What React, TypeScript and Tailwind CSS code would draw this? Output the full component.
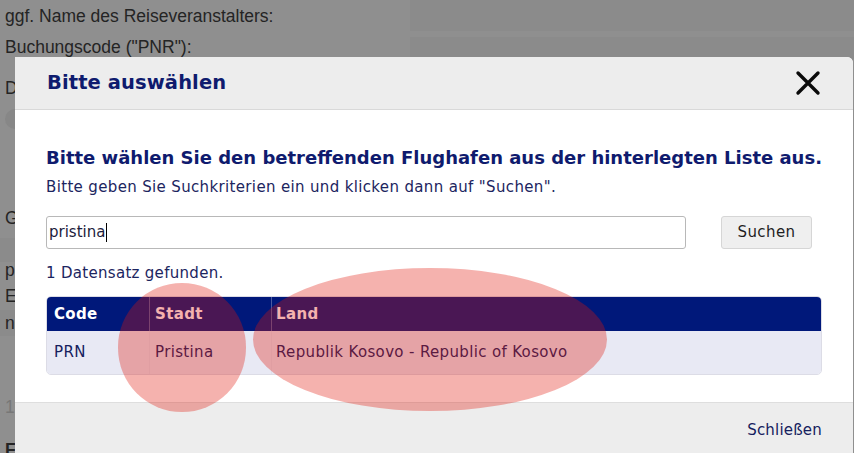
import React from "react";

const verdana = { fontFamily: '"DejaVu Sans", Verdana, sans-serif' };

function PageBehind() {
  // booking form that sits under the dimmed overlay
  return (
    <div className="absolute inset-0 bg-[#8f8f8f] text-[#242424] text-[17.5px]" style={{ fontFamily: '"Liberation Sans", Arial, sans-serif' }}>
      <div className="flex h-[32px] items-center">
        <span className="pl-[5px] w-[410px]">ggf. Name des Reiseveranstalters:</span>
        <div className="flex-1 h-[31px] self-start bg-[#8b8b8b]" />
      </div>
      <div className="flex h-[25px] items-center mt-[3px]">
        <span className="pl-[5px] w-[410px]">Buchungscode ("PNR"):</span>
        <div className="flex-1 h-[22px] bg-[#8b8b8b]" />
      </div>
      <div className="pl-[5px] mt-[15px]">D</div>
      <div className="ml-[5px] mt-[8px] w-[20px] h-[20px] rounded-full bg-[#878787]" />
      <div className="pl-[5px] mt-[76px]">G</div>
      <div className="mt-[6px] h-[24px] w-[15px] bg-[#8b8b8b]" />
      <div className="pl-[5px] leading-[20px] mt-[-2px]">p</div>
      <div className="pl-[5px] leading-[20px] mt-[6px]">E</div>
      <div className="mt-[4px] h-[26px] w-[15px] bg-[#8b8b8b] pl-[5px] leading-[26px]">n</div>
      <div className="pl-[5px] mt-[58px] text-[#777]">1</div>
      <div className="pl-[5px] mt-[17px] font-bold">F</div>
    </div>
  );
}

function Dialog() {
  return (
    <div className="absolute left-[15px] top-[57px] w-[838px] h-[420px] bg-white rounded-tr-[6px] overflow-hidden flex flex-col" style={verdana}>
      <div className="h-[53px] bg-[#ededed] border-b border-[#d9d9d9] flex items-center justify-between pl-[32px] pr-[32px]">
        <h2 className="text-[19.5px] font-bold text-[#0f1b6e] tracking-[0.1px]">Bitte auswählen</h2>
        <svg width="26" height="26" viewBox="0 0 26 26">
          <path d="M3 3 L23 23 M23 3 L3 23" stroke="#0a0a0a" strokeWidth="3.4" strokeLinecap="round" />
        </svg>
      </div>

      <div className="h-[292px] pl-[31px] pr-[16px] pt-[36px]">
        <p className="text-[18px] font-bold text-[#0f1b6e] leading-[24px] whitespace-nowrap">
          Bitte wählen Sie den betreffenden Flughafen aus der hinterlegten Liste aus.
        </p>
        <p className="text-[15px] text-[#1c2560] leading-[20px] mt-[7px] tracking-[0.35px]">
          Bitte geben Sie Suchkriterien ein und klicken dann auf "Suchen".
        </p>
        <div className="flex items-center mt-[19px]">
          <div className="w-[640px] h-[33px] border border-[#b8b8b8] rounded-[3px] flex items-center pl-[2px] text-[15px] text-[#1c1c3c]">
            pristina<span className="inline-block w-px h-[19px] bg-black ml-px" />
          </div>
          <button className="ml-[35px] w-[91px] h-[33px] bg-[#efefef] border border-[#d6d6d6] rounded-[3px] text-[15px] tracking-[0.4px] text-[#1e1e1e]">
            Suchen
          </button>
        </div>
        <p className="text-[15px] text-[#1c2560] mt-[14px] leading-[20px] tracking-[0.3px]">1 Datensatz gefunden.</p>

        <div className="mt-[13px] w-[776px] rounded-[5px] border border-[#dcdce6] overflow-hidden text-[15px] tracking-[0.35px]">
          <div className="flex h-[34px] bg-[#00187a] text-white font-bold">
            <div className="w-[102px] pl-[7px] flex items-center">Code</div>
            <div className="w-[122px] pl-[5px] flex items-center border-l border-[#4a5aa0]">Stadt</div>
            <div className="flex-1 pl-[4px] flex items-center border-l border-[#4a5aa0]">Land</div>
          </div>
          <div className="flex h-[43px] bg-[#e8e9f4] text-[#15205e]">
            <div className="w-[102px] pl-[7px] flex items-center">PRN</div>
            <div className="w-[122px] pl-[5px] flex items-center border-l border-[#e0e1ee]">Pristina</div>
            <div className="flex-1 pl-[4px] flex items-center border-l border-[#e0e1ee]">Republik Kosovo - Republic of Kosovo</div>
          </div>
        </div>
      </div>

      <div className="flex-1 bg-[#ededed] border-t border-[#dedede] flex justify-end pr-[31px] pt-[16px]">
        <span className="text-[15px] tracking-[0.2px] text-[#15205e]">Schließen</span>
      </div>
    </div>
  );
}

function Markers() {
  // translucent red rings drawn over the result row
  return (
    <>
      <div className="absolute left-[118px] top-[283px] w-[128px] h-[129px] rounded-full bg-[rgba(225,20,10,0.33)]" />
      <div className="absolute left-[253px] top-[268px] w-[354px] h-[143px] rounded-[50%] bg-[rgba(225,20,10,0.33)]" />
    </>
  );
}

export default function App() {
  return (
    <div className="relative w-[854px] h-[453px] overflow-hidden">
      <PageBehind />
      <Dialog />
      <Markers />
    </div>
  );
}
